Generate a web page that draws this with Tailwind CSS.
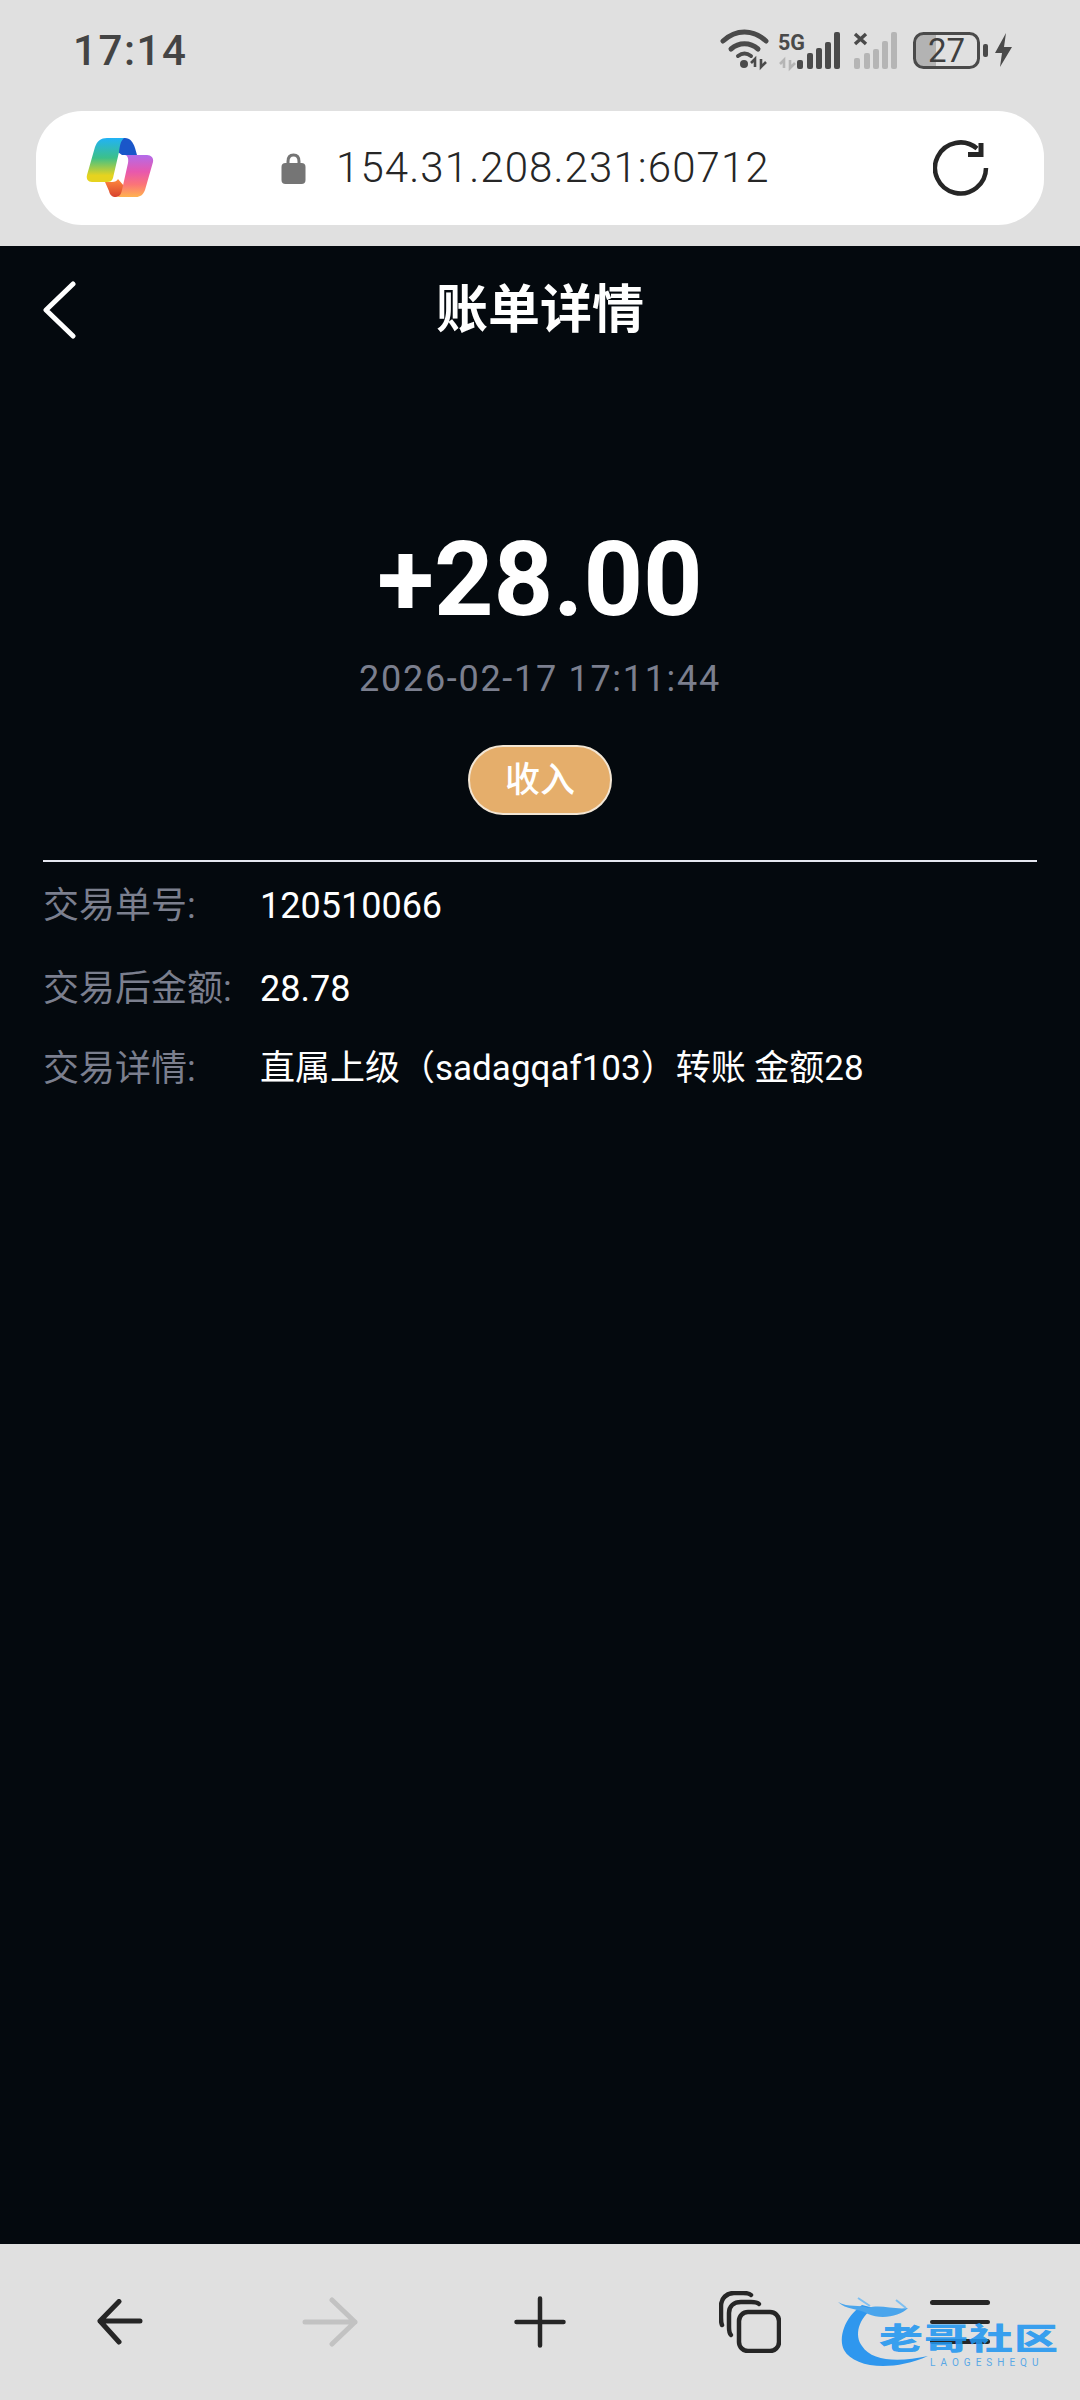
<!DOCTYPE html>
<html lang="zh-CN">
<head>
    <meta charset="UTF-8">
    <meta name="viewport" content="width=device-width, initial-scale=1.0">
    <title>账单详情</title>
    <script src="https://cdn.jsdelivr.net/npm/@tailwindcss/browser@4"></script>
</head>
<body class="bg-[#04090e] font-['Roboto','Noto_Sans_CJK_SC',sans-serif]">
<div class="relative flex h-[2400px] w-[1080px] flex-col overflow-hidden">

    <!-- Status bar + address bar -->
    <header class="h-[246px] shrink-0 bg-[#e0e0e0]">
        <div class="flex h-[111px] items-start justify-between">
            <span class="ml-[73px] mt-[26px] text-[42px] leading-[50px] font-medium tracking-[1.6px] text-[#444444]">17:14</span>
            <svg class="mr-[60px] mt-[28px]" width="300" height="44" viewBox="720 28 300 44" fill="none">
                <!-- wifi -->
                <path d="M723 41C736 29 753 29 766 41" stroke="#4a4a4a" stroke-width="5" stroke-linecap="round"/>
                <path d="M731 49C739 42 750 42 758 49" stroke="#4a4a4a" stroke-width="5" stroke-linecap="round"/>
                <path d="M738 56C742 53 747 53 751 56" stroke="#4a4a4a" stroke-width="4" stroke-linecap="round"/>
                <circle cx="744" cy="64" r="4" fill="#4a4a4a"/>
                <path d="M755 67V59L751 63M761 59V67L766 62" stroke="#4a4a4a" stroke-width="2.6"/>
                <!-- 5G signal -->
                <text x="778" y="50" font-family="Roboto" font-weight="700" font-size="22" textLength="27" lengthAdjust="spacingAndGlyphs" fill="#4a4a4a">5G</text>
                <path d="M784 68V60L780 64M790 60V68L795 63" stroke="#b5b5b5" stroke-width="2.6"/>
                <g fill="#4a4a4a">
                    <rect x="797" y="60" width="6" height="9" rx="2"/>
                    <rect x="807" y="53" width="6" height="16" rx="2"/>
                    <rect x="816" y="48" width="6" height="21" rx="2"/>
                    <rect x="825" y="42" width="6" height="27" rx="2"/>
                    <rect x="834" y="32" width="6" height="37" rx="2"/>
                </g>
                <!-- second sim -->
                <path d="M855 34L866 44M866 34L855 44" stroke="#4a4a4a" stroke-width="3.4"/>
                <g fill="#b5b5b5">
                    <rect x="854" y="58" width="6" height="11" rx="2"/>
                    <rect x="864" y="53" width="6" height="16" rx="2"/>
                    <rect x="873" y="49" width="6" height="20" rx="2"/>
                    <rect x="882" y="41" width="6" height="28" rx="2"/>
                    <rect x="891" y="32" width="6" height="37" rx="2"/>
                </g>
                <!-- battery -->
                <path d="M923 33.500H936V67.500H923C918 67.500 915 64 915 60V41C915 37 918 33.500 923 33.500Z" fill="#b3b3b3"/>
                <rect x="914.500" y="33.500" width="64" height="34" rx="9" stroke="#4a4a4a" stroke-width="3"/>
                <text x="946.500" y="62" text-anchor="middle" font-family="Roboto" font-size="33" fill="#3f3f3f">27</text>
                <rect x="983" y="44" width="5" height="13" rx="2" fill="#4a4a4a"/>
                <path d="M1006 33L995 53H1002L1000 67L1012 47H1004Z" fill="#4a4a4a"/>
            </svg>
        </div>
        <div class="mx-[36px] flex h-[114px] items-center rounded-[46px] bg-white">
            <svg class="ml-[49px]" width="69" height="64" viewBox="85 136 69 64">
                <defs>
                    <linearGradient id="cpLeft" x1="0" y1="0" x2="0" y2="1">
                        <stop offset="0" stop-color="#21b2f6"/>
                        <stop offset="0.45" stop-color="#3cc08a"/>
                        <stop offset="0.85" stop-color="#e6d31f"/>
                    </linearGradient>
                    <linearGradient id="cpRight" x1="0" y1="0" x2="0" y2="1">
                        <stop offset="0" stop-color="#b36bea"/>
                        <stop offset="0.4" stop-color="#e858ad"/>
                        <stop offset="0.7" stop-color="#fb7478"/>
                        <stop offset="1" stop-color="#ffb34f"/>
                    </linearGradient>
                    <linearGradient id="cpLow" x1="0" y1="0" x2="0" y2="1">
                        <stop offset="0" stop-color="#ff8a3c"/>
                        <stop offset="1" stop-color="#d8432f"/>
                    </linearGradient>
                </defs>
                <path d="M118 138H125C130 138 133 142 135 148L137 155H122L115 150Z" fill="#1a56c9"/>
                <path d="M107 138H124C120 142 120 146 119 152L113 178C112 181 110 182 107 182H92C88 182 86 179 87 175L95 147C97 141 101 138 107 138Z" fill="url(#cpLeft)"/>
                <path d="M105 182H112C115 182 117 181 118 179L124 186L123 190C122 194 120 197 116 197C112 197 110 195 109 191Z" fill="url(#cpLow)"/>
                <path d="M131 155H147C151 155 154 158 153 162L145 190C143 195 140 197 136 197H116C120 197 121 194 122 190L128 163C129 158 127 155 125 155Z" fill="url(#cpRight)"/>
            </svg>
            <svg class="ml-[127px]" width="25" height="31" viewBox="0 0 25 31" fill="#757575">
                <path d="M7 12V8.500C7 4 9.500 2 12.500 2S18 4 18 8.500V12" fill="none" stroke="#757575" stroke-width="3"/>
                <rect x="0.500" y="10" width="24" height="21" rx="4"/>
            </svg>
            <span class="ml-[30px] text-[42px] leading-[50px] font-light tracking-[1.1px] text-[#262626]">154.31.208.231:60712</span>
            <svg class="ml-auto mr-[55px]" width="56" height="56" viewBox="0 0 56 56" fill="none" stroke="#262626" stroke-width="4.500">
                <path d="M53 28A25.500 25.500 0 1 1 44 8.500"/>
                <path d="M35 14.500H48V3" stroke-width="5"/>
            </svg>
        </div>
    </header>

    <!-- Page -->
    <main class="flex min-h-0 flex-1 flex-col bg-[#04090e] px-[43px]">
        <div class="grid h-[128px] grid-cols-[1fr_auto_1fr] items-center">
            <svg class="-ml-[1px]" width="34" height="60" viewBox="0 0 34 60" fill="none" stroke="#ffffff" stroke-width="5" stroke-linecap="round" stroke-linejoin="round">
                <path d="M31 4L4 30L31 56"/>
            </svg>
            <h1 class="pt-[2px] text-[52px] leading-[64px] font-bold text-white">账单详情</h1>
            <div></div>
        </div>

        <div class="flex flex-col items-center">
            <p class="mt-[146px] text-[104px] leading-[120px] font-bold text-white">+28.00</p>
            <p class="mt-[14px] text-[36px] leading-[50px] tracking-[1.7px] text-[#7b7f8e]">2026-02-17 17:11:44</p>
            <span class="mt-[41px] flex h-[70px] w-[144px] items-center justify-center rounded-full border-2 border-[#f3e6d4] bg-[#e5ae6b] text-[35px] leading-none font-medium text-white">收入</span>
        </div>

        <div class="mt-[45px] h-[2px] w-[994px] bg-[#e5e7f0]"></div>

        <dl class="mt-[19px] text-[36px] leading-[50px]">
            <div class="flex">
                <dt class="w-[217px] text-[#7b7f8e]">交易单号:</dt>
                <dd class="text-white">120510066</dd>
            </div>
            <div class="mt-[33px] flex">
                <dt class="w-[217px] text-[#7b7f8e]">交易后金额:</dt>
                <dd class="text-white">28.78</dd>
            </div>
            <div class="mt-[30px] flex">
                <dt class="w-[217px] text-[#7b7f8e]">交易详情:</dt>
                <dd class="text-[35px] text-white">直属上级（sadagqaf103）转账 金额28</dd>
            </div>
        </dl>
    </main>

    <!-- Browser toolbar -->
    <nav class="grid h-[156px] shrink-0 grid-cols-5 bg-[#e0e0e0] px-[15px]">
        <div class="flex items-center justify-center">
            <svg width="46" height="46" viewBox="0 0 46 46" fill="none" stroke="#262626" stroke-width="5" stroke-linecap="round" stroke-linejoin="round">
                <path d="M43 22H3M22 2.500L3 22L22 43"/>
            </svg>
        </div>
        <div class="flex items-center justify-center">
            <svg width="56" height="50" viewBox="0 0 56 50" fill="none" stroke="#c2c2c2" stroke-width="5" stroke-linecap="round" stroke-linejoin="round">
                <path d="M3 25H53M30 3L53 25L30 47"/>
            </svg>
        </div>
        <div class="flex items-center justify-center">
            <svg width="52" height="52" viewBox="0 0 52 52" fill="none" stroke="#262626" stroke-width="4.500" stroke-linecap="round">
                <path d="M2.500 26H49.500M26 2.500V49.500"/>
            </svg>
        </div>
        <div class="flex items-center justify-center">
            <svg width="62" height="62" viewBox="0 0 62 62" fill="none" stroke="#262626" stroke-width="4.500" stroke-linecap="round">
                <rect x="20" y="21" width="40" height="39" rx="9"/>
                <path d="M12 44C10 42 10 40 10 36V22C10 15 15 11 22 11H32C36 11 38 11 40 13"/>
                <path d="M3 34C2 32 2 30 2 27V15C2 7 8 2 15 2H24C28 2 30 2 32 4"/>
            </svg>
        </div>
        <div class="flex items-center justify-center">
            <div class="flex w-[60px] flex-col gap-[15px]">
                <div class="h-[4.500px] rounded-full bg-[#262626]"></div>
                <div class="h-[4.500px] rounded-full bg-[#262626]"></div>
                <div class="h-[4.500px] rounded-full bg-[#262626]"></div>
            </div>
        </div>
    </nav>

    <!-- Watermark over the toolbar -->
    <div class="absolute left-[836px] top-[2290px] h-[86px] w-[230px]">
        <svg class="absolute left-0 top-0" width="110" height="86" viewBox="0 0 110 86" fill="none">
            <path d="M26 15C8 28 2 48 8 60C18 78 56 82 92 66C64 72 36 72 26 56C18 46 22 28 38 18Z" fill="#2f97ee"/>
            <path d="M2 12C12 18 24 14 32 18C44 14 58 20 72 18C64 26 46 30 32 24C22 18 10 20 2 12Z" fill="#4aa5ec"/>
            <path d="M22 8L34 16M60 10L70 18" stroke="#7fc0f2" stroke-width="2"/>
        </svg>
        <span class="absolute left-[43px] top-[34px] origin-top scale-y-[0.68] whitespace-nowrap text-[44px] leading-[44px] font-black tracking-[1px] text-[#2196f0]/90">老哥社区</span>
        <span class="absolute left-[94px] top-[68px] whitespace-nowrap text-[10px] leading-[10px] tracking-[5px] text-[#5aa8e6]">LAOGESHEQU</span>
    </div>
</div>
</body>
</html>
